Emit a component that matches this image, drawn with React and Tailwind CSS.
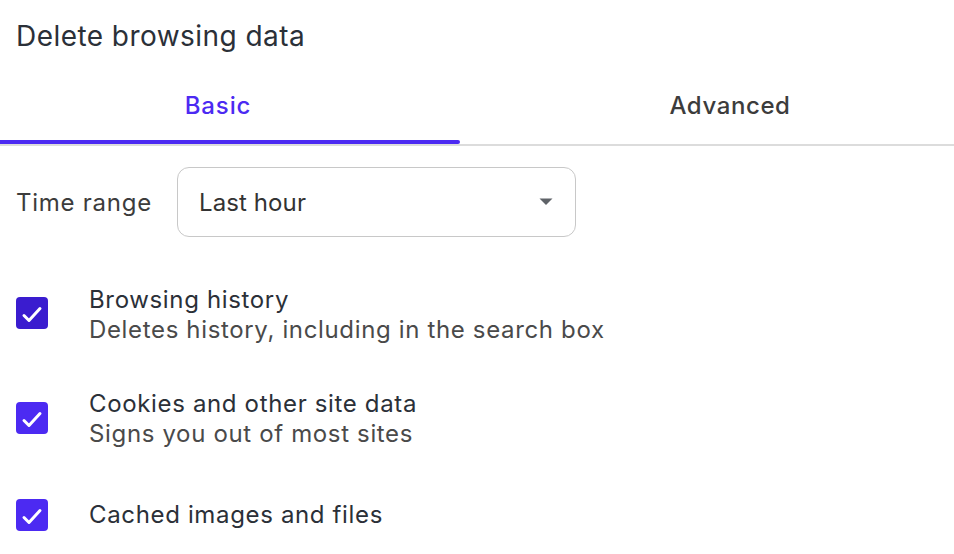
import React from "react";

function Check({ dark, className = "" }) {
  return (
    <div
      className={
        "w-[32px] h-[32px] rounded-[4px] flex items-center justify-center shrink-0 " +
        (dark ? "bg-[#3a1ccf] " : "bg-[#4c2af2] ") +
        className
      }
    >
      <svg width="32" height="32" viewBox="0 0 32 32">
        <path d="M8 18.5 L13 23.5 L24 11.5" fill="none" stroke="#fff" strokeWidth="3" strokeLinecap="round" strokeLinejoin="round" />
      </svg>
    </div>
  );
}

export default function App() {
  return (
    <div className="w-[954px] h-[554px] bg-white overflow-hidden flex flex-col" style={{ fontFamily: "Inter, 'Noto Sans', sans-serif" }}>
      <div className="pt-[19px] pl-[16px] text-[28px] leading-[34px] tracking-[0.45px] text-[#2b3038]">Delete browsing data</div>
      <div className="flex">
        <div className="w-[460px] flex flex-col">
          <div className="h-[87px] pt-[38px] pr-[24px] text-center text-[24px] leading-[30px] font-medium tracking-[0.9px] text-[#4c2af2]">Basic</div>
          <div className="h-[4px] bg-[#4c2af2] rounded-r-[3px]"></div>
        </div>
        <div className="flex-1 flex flex-col">
          <div className="h-[87px] pt-[38px] pl-[46px] text-center text-[24px] leading-[30px] font-medium tracking-[0.6px] text-[#3c3c3c]">Advanced</div>
          <div className="h-[4px]"></div>
        </div>
      </div>
      <div className="h-[1.5px] bg-[#dcdcdc]"></div>
      <div className="mt-[21.5px] flex items-center pl-[16px]">
        <div className="w-[161px] text-[24px] leading-[30px] tracking-[0.75px] text-[#3c3c3c] pt-[2px]">Time range</div>
        <div className="w-[399px] h-[70px] rounded-[12px] border-[1.5px] border-[#c8c8c8] flex items-center pl-[21px] pr-[22px]">
          <span className="flex-1 text-[24px] leading-[30px] tracking-[0.1px] text-[#333] pt-[2px]">Last hour</span>
          <svg width="14" height="8" viewBox="0 0 14 8">
            <path d="M0.5 0.5 L13.5 0.5 L7 7 Z" fill="#5f6368" />
          </svg>
        </div>
      </div>
      <div className="mt-[48px] flex items-start pl-[16px] gap-[41px]">
        <Check dark className="mt-[12px]" />
        <div className="text-[24px] leading-[30px] tracking-[0.65px]">
          <div className="text-[#2b3038]">Browsing history</div>
          <div className="text-[#4a4a4a]">Deletes history, including in the search box</div>
        </div>
      </div>
      <div className="mt-[44px] flex items-start pl-[16px] gap-[41px]">
        <Check className="mt-[13px]" />
        <div className="text-[24px] leading-[30px] tracking-[0.65px]">
          <div className="text-[#2b3038]">Cookies and other site data</div>
          <div className="text-[#4a4a4a]">Signs you out of most sites</div>
        </div>
      </div>
      <div className="mt-[50px] flex items-center pl-[16px] gap-[41px]">
        <Check />
        <div className="text-[24px] leading-[30px] tracking-[0.65px] text-[#2b3038]">Cached images and files</div>
      </div>
    </div>
  );
}
